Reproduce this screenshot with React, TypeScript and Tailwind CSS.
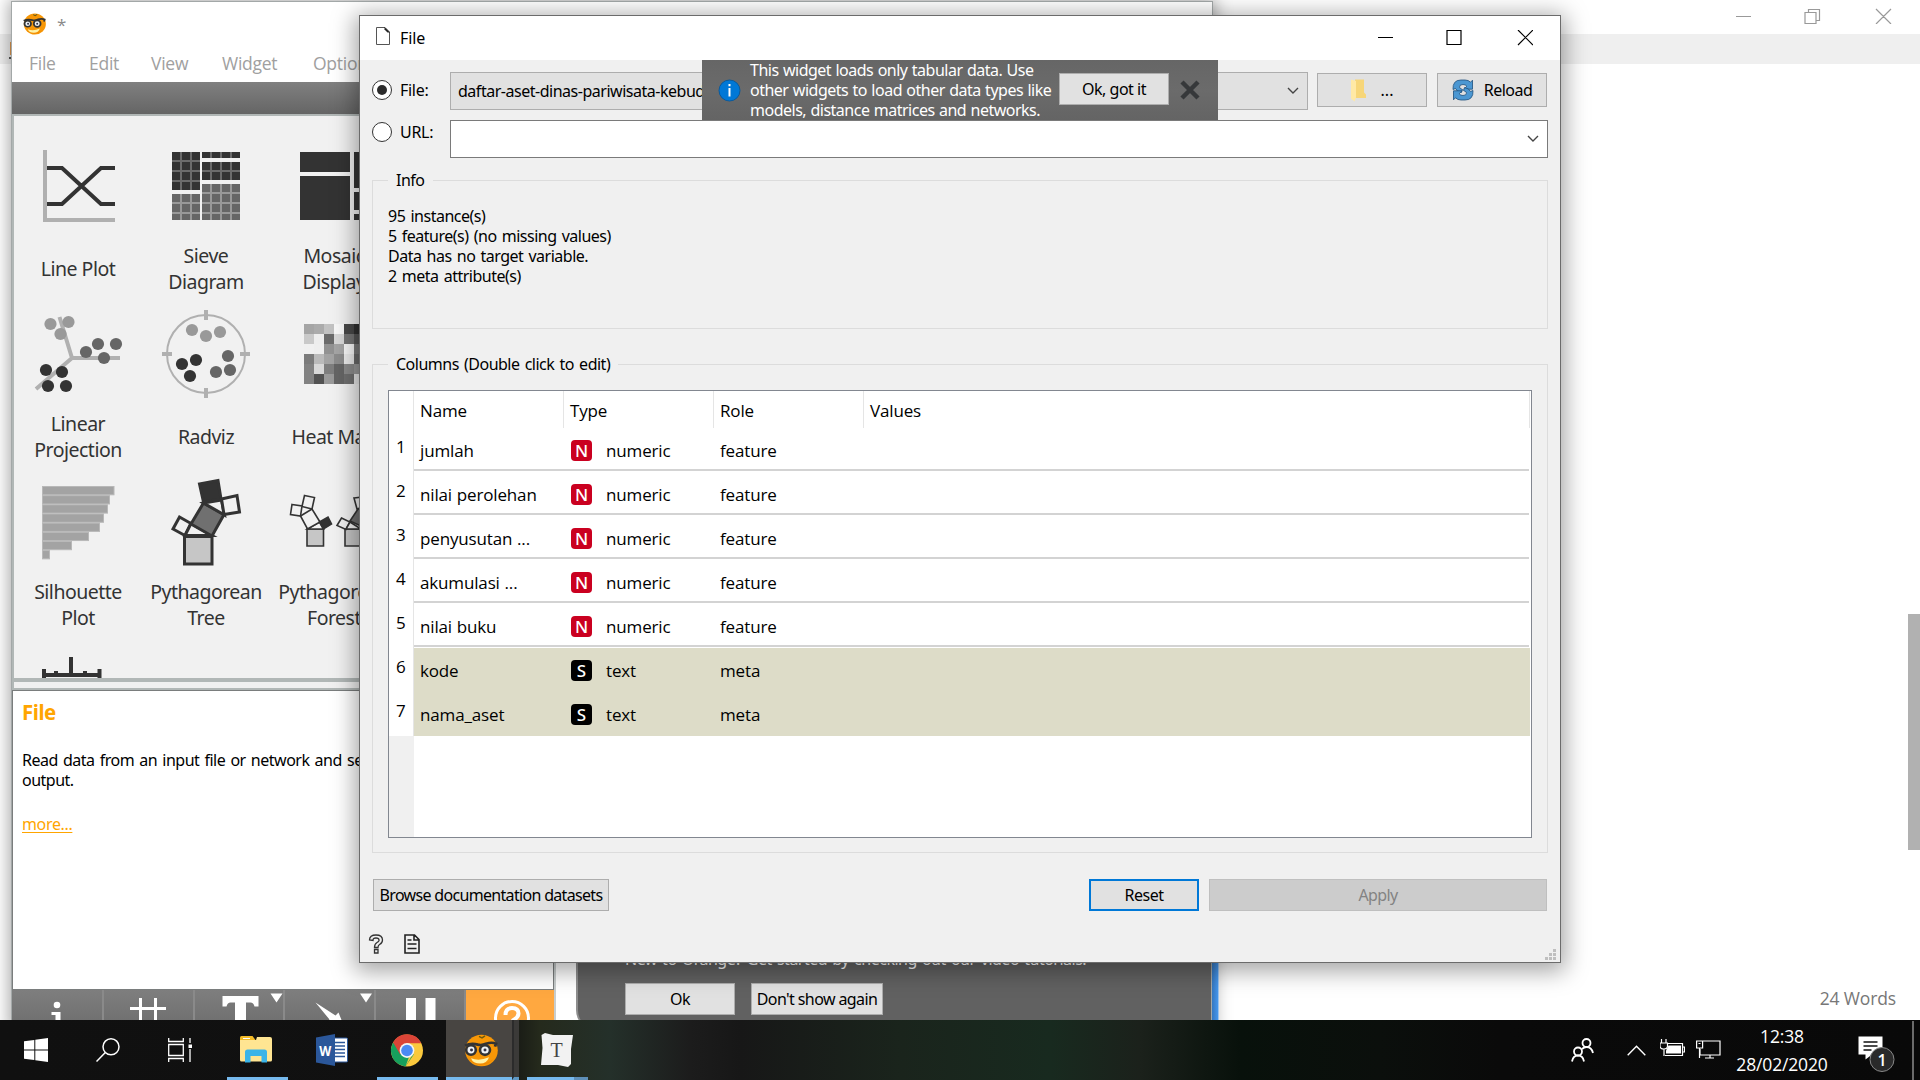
import React from "react";

const UI = "font-['Noto_Sans',sans-serif] text-[16px] leading-5 tracking-[-0.5px] [word-spacing:1.5px]";
const SEGOE = "font-['Open_Sans','Noto_Sans',sans-serif]";
const BTN = "flex shrink-0 items-center justify-center overflow-hidden whitespace-nowrap border border-[#adadad] bg-[#e1e1e1] text-black";

function OrangeLogo({ className }: { className: string }) {
  return (
    <svg className={className} viewBox="0 0 34 34" preserveAspectRatio="none">
      <circle cx="17.500" cy="17" r="16.300" fill="#f79707" />
      <path d="M4 25a16 16 0 0 0 26 0a15.500 12 0 0 1 -26 0z" fill="#e57a04" opacity=".6" />
      <path d="M15 2.500l3 1.500l3-2" stroke="#6a5a10" strokeWidth="1.500" fill="none" />
      <path d="M1 12q6-3 13-1q4 1 8-1q6-2 10 0l-1 3" stroke="#333" strokeWidth="2.800" fill="none" />
      <circle cx="7" cy="16.500" r="4.800" fill="#eef2f6" stroke="#333" strokeWidth="2.600" />
      <circle cx="21" cy="16.500" r="5" fill="#eef2f6" stroke="#333" strokeWidth="2.600" />
      <circle cx="7.500" cy="16.500" r="1.500" fill="#334" />
      <circle cx="21" cy="16.500" r="1.500" fill="#334" />
      <path d="M7 25q8 3.500 18-1q-2 6.500-9 6.500t-9-5.500z" fill="#fff3a8" />
    </svg>
  );
}

function LinePlotIcon() {
  return (
    <svg className="size-20" viewBox="38 146 80 80" fill="none">
      <path d="M45 150v70h70" stroke="#b0b0b0" strokeWidth="4" />
      <path d="M47 168h15l39 36h14M47 204h15l39-36h14" stroke="#333" strokeWidth="4" />
    </svg>
  );
}

function SieveIcon() {
  const blocks = [
    [172, 152, 28, 38, "#333", "#6b6b6b"],
    [202, 152, 38, 6, "#333", "#6b6b6b"],
    [202, 162, 38, 18, "#333", "#6b6b6b"],
    [172, 194, 28, 26, "#666", "#999"],
    [202, 184, 38, 36, "#666", "#999"],
  ] as const;
  return (
    <svg className="size-20" viewBox="166 146 80 80">
      {blocks.map(([x, y, w, h, fill, line], i) => (
        <g key={i}>
          <rect x={x} y={y} width={w} height={h} fill={fill} />
          {[180, 190, 210, 220, 230].filter((v) => v > x && v < x + w).map((v) => (
            <rect key={v} x={v} y={y} width="2" height={h} fill={line} />
          ))}
          {[160, 170, 180, 192, 202, 212].filter((v) => v > y && v < y + h - 1).map((v) => (
            <rect key={v} x={x} y={v} width={w} height="2" fill={line} />
          ))}
        </g>
      ))}
    </svg>
  );
}

function MosaicIcon() {
  return (
    <svg className="size-20" viewBox="294 146 80 80" fill="#333">
      <path d="M300 152h50v20h-50zM300 176h50v44h-50zM354 152h14v36h-14zM354 192h14v18h-14zM354 214h14v6h-14z" />
    </svg>
  );
}

function Dots({ points, fill }: { points: number[][]; fill: string }) {
  return <>{points.map(([x, y], i) => <circle key={i} cx={x} cy={y} r="6.100" fill={fill} />)}</>;
}

function LinearProjectionIcon() {
  return (
    <svg className="size-20 overflow-visible" viewBox="38 314 80 80">
      <path d="M59.500 317L72 358H120M72 358L36 389" stroke="#b0b0b0" strokeWidth="4" fill="none" />
      <Dots fill="#999" points={[[50.5, 324], [68.5, 322], [60.5, 334]]} />
      <Dots fill="#666" points={[[98, 344], [116, 344], [86, 352], [104, 358]]} />
      <Dots fill="#333" points={[[46, 370], [62, 372], [48, 386], [66, 386]]} />
    </svg>
  );
}

function RadvizIcon() {
  return (
    <svg className="size-20 overflow-visible" viewBox="166 314 80 80">
      <circle cx="206" cy="354" r="39" stroke="#b0b0b0" strokeWidth="2" fill="none" />
      <path d="M206 310v10M206 388v10M162 354h10M240 354h10" stroke="#b0b0b0" strokeWidth="4" />
      <Dots fill="#999" points={[[192, 330], [206, 336], [220, 332]]} />
      <Dots fill="#333" points={[[182, 364], [196, 360], [190, 376]]} />
      <Dots fill="#666" points={[[228, 356], [216, 372], [230, 370]]} />
    </svg>
  );
}

const HEAT = [
  ["#a5a5a5", "#ababab", "#c2c2c2", "#f8f8f8", "#484848", "#303030"],
  ["#c9c9c9", "#ededed", "#6b6b6b", "#d8d8d8", "#757575", "#555555"],
  ["#f0f0f0", "#eeeeee", "#929292", "#a5a5a5", "#f8f8f8", "#7a7a7a"],
  ["#7b7b7b", "#bababa", "#a3a3a3", "#8c8c8c", "#ececec", "#6a6a6a"],
  ["#828282", "#d8d8d8", "#7e7e7e", "#656565", "#8c8c8c", "#9a9a9a"],
  ["#828282", "#525252", "#9a9a9a", "#656565", "#707070", "#e8e8e8"],
];

function HeatMapIcon() {
  return (
    <svg className="size-20" viewBox="294 314 80 80" shapeRendering="crispEdges">
      {HEAT.map((row, y) => row.map((c, x) => (
        <rect key={x + "-" + y} x={304 + x * 10} y={324 + y * 10} width="10" height="10" fill={c} />
      )))}
    </svg>
  );
}

function SilhouetteIcon() {
  return (
    <svg className="size-20" viewBox="38 482 80 80">
      {[72, 67.5, 65.5, 61.5, 57.5, 46.5, 29.5, 7.5].map((w, i) => (
        <rect key={i} x="42.500" y={486.5 + i * 9.15} width={w - 0.5} height="8.300" fill="#a3a3a3" stroke="#b8b8b8" strokeWidth="1" />
      ))}
    </svg>
  );
}

function PythTreeIcon() {
  return (
    <svg className="size-20 overflow-visible" viewBox="166 482 80 80" stroke="#333" strokeWidth="3" fill="#f1f1f1">
      <path d="M184.500 536.500h27.500v27.500h-27.500z" fill="#c6c6c6" />
      <path d="M179.500 517l11.500 6.500l-6 12l-12-6.500z" />
      <path d="M191 523.500l-6 12l27 0z" />
      <path d="M203.500 503l20.500 11.500l-12 21.500l-21-12z" fill="#707070" />
      <path d="M203.500 503l18-3l3 15z" />
      <path d="M199.500 484l18.500-3.500l3 18.500l-17.500 3z" fill="#333" />
      <path d="M221.500 499l15.500-3.500l2.500 16.500l-15.500 2.500z" />
    </svg>
  );
}

function ForestIcon() {
  return (
    <svg className="size-20 overflow-visible" viewBox="294 482 80 80" stroke="#333" strokeWidth="1.600" fill="#f1f1f1">
      <path d="M307 529h16.500v17h-16.500z" fill="#c6c6c6" />
      <path d="M307.500 529l12-7l4 7z" />
      <path d="M300.500 516l11.500-7l8 13l-12.500 7z" />
      <path d="M304.500 495.500l10 2l-2.500 11.500l-10-2.500z" />
      <path d="M292 504.500l10 1.500l-1.500 10l-10-1.500z" />
      <path d="M319.500 522l8.500-5l3.500 7l-8 5z" fill="#333" />
      <path d="M345 529h18v17h-18z" fill="#c6c6c6" />
      <path d="M350 521l8-12h5v18z" fill="#707070" />
      <path d="M341.500 518l8.500 4l-4 7.500l-9-4z" />
      <path d="M350 522l11 7h-15z" />
      <path d="M354 498l9-1v10l-6 2z" />
    </svg>
  );
}

function AxisIcon() {
  return (
    <svg className="size-20" viewBox="38 650 80 80" stroke="#333" strokeWidth="4" fill="none">
      <path d="M42 675h59M44 669v12M99.500 669v12M71 657v20M56 671v6M85 671v6" />
    </svg>
  );
}

const WIDGETS = [
  { label: ["Line Plot"], icon: <LinePlotIcon /> },
  { label: ["Sieve", "Diagram"], icon: <SieveIcon /> },
  { label: ["Mosaic", "Display"], icon: <MosaicIcon /> },
  { label: ["Linear", "Projection"], icon: <LinearProjectionIcon /> },
  { label: ["Radviz"], icon: <RadvizIcon /> },
  { label: ["Heat Map"], icon: <HeatMapIcon /> },
  { label: ["Silhouette", "Plot"], icon: <SilhouetteIcon /> },
  { label: ["Pythagorean", "Tree"], icon: <PythTreeIcon /> },
  { label: ["Pythagorean", "Forest"], icon: <ForestIcon /> },
  { label: [], icon: <AxisIcon /> },
];

function DockButtons() {
  const cell = "flex h-[30px] w-[90.5px] shrink-0 border-r-2 border-[#8a8a8a] bg-linear-to-b from-[#7e7e7e] to-[#717171]";
  return (
    <div className="flex h-[30px] w-[542px]">
      <div className="flex h-[30px] w-[92px] shrink-0 border-r-2 border-[#8a8a8a] bg-linear-to-b from-[#7e7e7e] to-[#717171]">
        <svg className="h-[30px] w-full" viewBox="12 990 90 30" fill="#fff">
          <circle cx="57" cy="1005" r="3.300" />
          <path d="M51.500 1012h9v8h-5v-5h-4z" />
        </svg>
      </div>
      <div className={cell}>
        <svg className="h-[30px] w-full" viewBox="104 990 88.500 30" stroke="#fff" strokeWidth="3">
          <path d="M130 1008.500h36M140.500 998v22M155.500 998v22" />
        </svg>
      </div>
      <div className={cell}>
        <svg className="h-[30px] w-full" viewBox="194.500 990 88.500 30" fill="#fff">
          <path d="M222 996h36v10.500h-4q-1-4-4-4h-4.500v17.500h-11v-17.500h-4.500q-3 0-4 4h-4zM270 993.500h12l-6 9z" />
        </svg>
      </div>
      <div className={cell}>
        <svg className="h-[30px] w-full" viewBox="285 990 88.500 30" fill="#fff">
          <path d="M315.500 1002.500l20 13l3-3l4 10h-16l3-3zM360 993.500h12l-6 9z" />
        </svg>
      </div>
      <div className={cell}>
        <svg className="h-[30px] w-full" viewBox="375.500 990 88.500 30" fill="#fff">
          <path d="M405.500 998h10v22h-10zM425 998h10v22h-10z" />
        </svg>
      </div>
      <div className="h-[30px] flex-1 bg-[#ffa840]">
        <svg className="h-[30px] w-full" viewBox="466 990 88 30" fill="none" stroke="#fff">
          <circle cx="512" cy="1018" r="16.500" strokeWidth="3" />
          <path d="M505.500 1015q0-7 6.500-7t6.500 5.500q0 4-6.500 7.500" strokeWidth="4" />
        </svg>
      </div>
    </div>
  );
}

function OrangeWindow() {
  return (
    <div className="absolute left-[11px] top-px flex h-[1030px] w-[1202px] flex-col border border-[#a3a8a8] bg-white shadow-[0_0_16px_2px_rgba(0,0,0,0.35)]">
      <div className="flex h-[34px] shrink-0 items-center pl-[11px] pt-2.5">
        <OrangeLogo className="h-[22px] w-[23px]" />
        <span className={SEGOE + " ml-[11px] mt-0.5 text-[17px] leading-5 text-[#8a8a8a]"}>*</span>
      </div>
      <nav className={SEGOE + " flex h-[46px] shrink-0 items-start gap-[34px] pl-[17px] pt-[15px] text-[17.500px] leading-6 tracking-[-0.25px] text-[#a0a0a0]"}>
        <span className="w-[26px]">File</span>
        <span className="w-[28px]">Edit</span>
        <span className="w-[37px]">View</span>
        <span className="w-[57px]">Widget</span>
        <span>Options</span>
      </nav>
      <div className="h-8 shrink-0 bg-linear-to-b from-[#808080] to-[#656565]" />
      <div className="flex min-h-0 flex-1">
        <div className="flex w-[542px] shrink-0 flex-col">
          <div className="grid h-[568px] shrink-0 auto-rows-[168px] grid-cols-[128px_128px_128px] content-start overflow-hidden border-2 border-b-4 border-[#b1b7b6] bg-[#f1f1f1] pt-3.5">
            {WIDGETS.map((w, i) => (
              <div key={i} className="flex flex-col items-center pt-4">
                {w.icon}
                <div className="mt-[17px] flex h-[52px] flex-col items-center justify-center whitespace-nowrap font-['Noto_Sans',sans-serif] text-[19.500px] leading-[26px] tracking-[-0.5px] text-[#333]">
                  {w.label.map((l) => <span key={l}>{l}</span>)}
                </div>
              </div>
            ))}
          </div>
          <div className="h-2 shrink-0 border-b-2 border-l-2 border-[#b1b7b6] bg-[#f0f0f0]" />
          <div className={UI + " h-[300px] shrink-0 border border-[#7a7d7d] bg-white pl-[9px] pt-[7px] text-black"}>
            <h2 className="text-[20.500px] font-bold leading-7 tracking-[-0.5px] text-[#ffa500]">File</h2>
            <p className="mt-6 w-[430px]">Read data from an input file or network and send it to the output.</p>
            <p className="mt-6 tracking-[-0.35px] text-[#ffa500] underline underline-offset-2">more...</p>
          </div>
          <DockButtons />
        </div>
        <div className="flex flex-1 flex-col items-end border-l-2 border-[#c8cdcd] bg-white">
          <div className="mt-auto flex h-[430px] w-[636px] border-r border-[#a3a8a8]">
            <div className={UI + " flex flex-1 flex-col justify-start rounded-bl-[20px] border-b border-l-2 border-[#8d8d8d] bg-[#616161] pl-[47px] pt-[349px] text-black"}>
              <p className="text-white">New to Orange? Get started by checking out our video tutorials!</p>
              <div className="mt-[14px] flex gap-4">
                <button className={BTN + " h-8 w-[110px]"}>Ok</button>
                <button className={BTN + " h-8 w-[132px] tracking-[-0.6px]"}>Don't show again</button>
              </div>
            </div>
          </div>
        </div>
      </div>
    </div>
  );
}

function Chevron() {
  return (
    <svg className="h-2 w-3 shrink-0" viewBox="0 0 12 8" fill="none" stroke="#444" strokeWidth="1.400">
      <path d="M1 1l5 5l5-5" />
    </svg>
  );
}

function Radio({ checked, label }: { checked?: boolean; label: string }) {
  return (
    <label className="flex h-5 w-[78px] shrink-0 items-center gap-2">
      <span className="flex size-5 items-center justify-center rounded-full border-[1.500px] border-[#333] bg-white">
        {checked && <span className="size-2.5 rounded-full bg-[#2b2b2b]" />}
      </span>
      <span className="tracking-[-0.3px]">{label}</span>
    </label>
  );
}

const ROWS = [
  ["jumlah", "N", "numeric", "feature"],
  ["nilai perolehan", "N", "numeric", "feature"],
  ["penyusutan ...", "N", "numeric", "feature"],
  ["akumulasi ...", "N", "numeric", "feature"],
  ["nilai buku", "N", "numeric", "feature"],
  ["kode", "S", "text", "meta"],
  ["nama_aset", "S", "text", "meta"],
];

function ColumnsTable() {
  return (
    <div className={SEGOE + " flex h-[448px] w-[1144px] flex-col border border-[#828790] bg-white text-[17px] leading-6 tracking-[-0.15px] text-black [word-spacing:0.500px]"}>
      <div className="flex h-[37px] shrink-0">
        <div className="w-[25px] border-r border-[#e5e5e5]" />
        {["Name", "Type", "Role"].map((h) => (
          <div key={h} className="flex w-[150px] items-center border-r border-[#e5e5e5] pl-1.5 pt-[3px]">{h}</div>
        ))}
        <div className="flex w-[666px] items-center border-r border-[#e5e5e5] pl-1.5 pt-[3px]">Values</div>
      </div>
      {ROWS.map(([name, kind, type, role], i) => (
        <div key={name} className="flex h-11 shrink-0">
          <div className="w-[25px] border-r border-[#e5e5e5] pl-[7px] pt-[7px] leading-6">{i + 1}</div>
          <div className={kind === "N" ? "flex w-[1115px] flex-col" : "flex w-[1116px] flex-col bg-[#dddcc8]"}>
            <div className="flex h-[41px] shrink-0 items-center pt-[3px]">
              <span className="w-[150px] pl-1.5 pt-0.5">{name}</span>
              <span className={(kind === "N" ? "bg-[#ca0020]" : "bg-black") + " ml-[7px] flex h-[21px] w-[21px] items-center justify-center rounded-[4px] font-['Noto_Sans',sans-serif] text-[17px] font-medium leading-[21px] tracking-normal text-white"}>{kind}</span>
              <span className="ml-3.5 w-[114px] pt-0.5">{type}</span>
              <span className="pt-0.5">{role}</span>
            </div>
            {kind === "N" && <div className="h-0.5 bg-[#d3d3d3]" />}
          </div>
        </div>
      ))}
      <div className="w-[25px] flex-1 bg-[#f0f0f0]" />
    </div>
  );
}

function MessageBar() {
  return (
    <div className="absolute left-[342px] top-11 flex h-[60px] w-[516px] bg-linear-to-b from-[#666] via-[#6b6b6b] to-[#646464] text-white">
      <svg className="ml-4 mt-[18.500px] size-[23px]" viewBox="0 0 23 23">
        <circle cx="11.500" cy="11.500" r="10.500" fill="#0078d7" stroke="#0a5a9c" />
        <path d="M10.500 9h2v8.500h-2zM10.500 5h2v2.300h-2z" fill="#fff" />
      </svg>
      <p className="ml-[9px] w-[309px] whitespace-nowrap [word-spacing:0.700px]">
        This widget loads only tabular data. Use<br />other widgets to load other data types like<br />models, distance matrices and networks.
      </p>
      <button className={BTN + " mt-[13px] h-8 w-[110px]"}>Ok, got it</button>
      <svg className="ml-[11px] mt-5 size-5" viewBox="0 0 20 20" stroke="#36383a" strokeWidth="4.500">
        <path d="M2 2l16 16M18 2l-16 16" />
      </svg>
    </div>
  );
}

function FileDialog() {
  return (
    <div className={UI + " absolute left-[359px] top-[15px] flex h-[948px] w-[1202px] flex-col border border-[#6b6b6b] bg-[#f0f0f0] text-black shadow-[0_4px_22px_4px_rgba(0,0,0,0.36)]"}>
      <div className="flex h-11 shrink-0 items-center bg-white pl-4">
        <svg className="-mt-1 h-[18px] w-3.5" viewBox="0 0 14 18" fill="none" stroke="#555">
          <path d="M.5.500h8.500l4.500 4.500v12.500h-13z" />
          <path d="M8.500 0l5.500 5.500h-2.500l-3-3z" fill="#222" stroke="none" />
        </svg>
        <span className="ml-2.5 tracking-[-0.1px]">File</span>
        <svg className="ml-auto mr-[27px] h-4 w-[156px]" viewBox="1377.500 29.500 156 16" fill="none" stroke="#000" strokeWidth="1.200">
          <path d="M1378.500 37h15M1447.500 30h14v14h-14zM1518.500 29.500l15 15M1533.500 29.500l-15 15" />
        </svg>
      </div>
      <div className="flex flex-1 flex-col px-3 pt-3">
        <div className="flex h-[38px] items-center">
          <div className="pb-0.5"><Radio checked label="File:" /></div>
          <div className="flex h-[38px] w-[858px] items-center justify-between border border-[#adadad] bg-[#e1e1e1] pb-px pl-[7px] pr-2">
            <span className="whitespace-nowrap tracking-[-0.48px]">daftar-aset-dinas-pariwisata-kebudayaan</span>
            <Chevron />
          </div>
          <button className={BTN + " -mt-0.5 ml-[9px] h-[34px] w-[110px]"}>
            <svg className="h-[23px] w-[15px]" viewBox="0 0 15 23">
              <path d="M4 .5h9v13l2 2v3.500h-11z" fill="#f7d679" />
              <path d="M0 .5l5 1.500v16.500l-1.500 4l-3.500-3z" fill="#ffe9a6" />
            </svg>
            <span className="ml-[15px] tracking-normal">...</span>
          </button>
          <button className={BTN + " -mt-0.5 ml-2.5 h-[34px] w-[110px]"}>
            <svg className="h-[22px] w-[22px]" viewBox="0 0 22 22" fill="#4b97d2" stroke="#1d4f7c" strokeWidth=".8">
              <path d="M1 10.500q-.500-9.500 8-9.500h4q3.500 0 5.500 2.200l2-2v9h-8.500l2.800-3q-1.300-1.700-3.800-1.700q-3.500 0-3.500 2.500q0 1.500 3 2.500l-1 3q-5-1-6-4z" />
              <path d="M21 11.500q.500 9.500-8 9.500h-4q-3.500 0-5.500-2.200l-2 2v-9h8.500l-2.800 3q1.300 1.700 3.800 1.700q3.500 0 3.500-2.500q0-1.500-3-2.500l1-3q5 1 6 4z" />
            </svg>
            <span className="ml-2.5">Reload</span>
          </button>
        </div>
        <div className="mt-2.5 flex h-[38px] items-start">
          <div className="pt-0.5"><Radio label="URL:" /></div>
          <div className="flex h-[38px] w-[1098px] items-center justify-end border border-[#7a7a7a] bg-white pr-2">
            <Chevron />
          </div>
        </div>
        <fieldset className="mt-3 h-[159px] border border-[#dcdcdc] pl-[15px]">
          <legend className="px-2">Info</legend>
          <p className="mt-4">95 instance(s)<br />5 feature(s) (no missing values)<br />Data has no target variable.<br />2 meta attribute(s)</p>
        </fieldset>
        <fieldset className="mt-[25px] h-[499px] border border-[#dcdcdc] pl-[15px]">
          <legend className="px-2">Columns (Double click to edit)</legend>
          <div className="pt-4"><ColumnsTable /></div>
        </fieldset>
        <div className="mt-[26px] flex h-8 pl-px">
          <button className={BTN + " w-[236px] tracking-[-0.68px]"}>Browse documentation datasets</button>
          <button className="ml-auto flex w-[110px] items-center justify-center border-2 border-[#0078d7] bg-[#e1e1e1]">Reset</button>
          <button className="ml-2.5 mr-px flex w-[338px] items-center justify-center border border-[#bfbfbf] bg-[#ccc] tracking-[-0.6px] text-[#838383]">Apply</button>
        </div>
        <div className="mt-[23px] flex items-start">
          <svg className="-ml-1 h-5 w-4" viewBox="0 0 16 20" fill="none" stroke="#333" strokeWidth="1.300">
            <path d="M1.500 6q0-5 6.500-5t6.500 5q0 3-3 4.500q-1.500 1-1.500 3h-3.500q0-3.500 2.500-5t2-2.500q0-2-3-2t-3 2.500zM6.500 15.500h3.500v3.500h-3.500z" />
          </svg>
          <svg className="ml-5 h-5 w-4" viewBox="0 0 16 20" fill="none" stroke="#222" strokeWidth="1.600">
            <path d="M1 1h9.500l4.500 4.500v13.500h-14zM3.500 6h4M3.500 10h9M3.500 14.500h9M10 1v5h5" />
          </svg>
          <svg className="-mr-[9px] ml-auto mt-[15px] h-3 w-[13px]" viewBox="0 0 13 12" fill="#bfbfbf">
            <path d="M9 0h3v3h-3zM9 4h3v3h-3zM9 8h3v3h-3zM5 4h3v3h-3zM5 8h3v3h-3zM1 8h3v3h-3z" />
          </svg>
        </div>
      </div>
      <MessageBar />
    </div>
  );
}

function Taskbar() {
  return (
    <div className="relative flex h-[60px] shrink-0 items-center bg-[linear-gradient(90deg,#101010_0px,#111_500px,#252a1c_540px,#24302a_610px,#1c1c1c_690px,#171717_740px,#1a241c_900px,#182a1f_1050px,#1b211b_1140px,#08110b_1240px,#0b0f0c_1380px,#0a0a0a_1500px,#090909_1920px)]">
      <svg className="ml-6 size-6" viewBox="0 0 24 24" fill="#fff">
        <path d="M0 3.300L10.300 2v9.500H0zM11.300 1.800L24 0v11.500H11.300zM0 12.500h10.300V22L0 20.700zM11.300 12.500H24V24L11.300 22.200z" />
      </svg>
      <svg className="ml-12 size-6" viewBox="0 0 24 24" fill="none" stroke="#fff" strokeWidth="1.500">
        <circle cx="15" cy="8.800" r="8" /><path d="M9.300 14.500L.5 23.500" />
      </svg>
      <svg className="ml-12 size-6" viewBox="0 0 24 24" fill="none" stroke="#fff" strokeWidth="1.300">
        <path d="M.7 0v3.500h14.600V0M.7 6.500h14.600v11H.7zM.7 24v-3.500h14.600V24M22 0v5M22 11v13" />
        <path d="M20.500 6.500h3.500v3.500h-3.500z" fill="#fff" stroke="none" />
      </svg>
      <div className="ml-[35px] flex h-[60px] w-[61px] items-center justify-center border-b-[3px] border-[#76b9ed] pr-1 pt-0.5">
        <svg className="h-[27px] w-8" viewBox="0 0 32 27">
          <path d="M0 1.500q0-1.500 1.500-1.500h11l3 4h-15.500z" fill="#f4bb27" />
          <path d="M3 2h7v1h-7z" fill="#fff" />
          <path d="M0 4h16l1-3h13q2 0 2 2v21q0 1.500-1.500 1.500h-29q-1.500 0-1.500-1.500z" fill="#ffe592" />
          <path d="M5 26.500v-10.500q0-2.500 2.500-2.500h17q2.500 0 2.500 2.500v10.500h-5.500v-6.500h-11v6.500z" fill="#3bb4e8" />
        </svg>
      </div>
      <svg className="ml-7 h-8 w-8" viewBox="0 0 32 32">
        <path d="M17 4h13.500q1 0 1 1v22q0 1-1 1H17z" fill="#fff" stroke="#2b579a" />
        <path d="M19 8.500h10M19 12h10M19 15.500h10M19 19h10M19 22.500h10" stroke="#2b579a" strokeWidth="1.500" />
        <path d="M0 3.500L19 0v32L0 28.500z" fill="#2b579a" />
        <text x="9.300" y="21.500" textAnchor="middle" fill="#fff" fontSize="14" fontWeight="700" fontFamily="Open Sans, sans-serif" textLength="12" lengthAdjust="spacingAndGlyphs">W</text>
      </svg>
      <div className="ml-[29px] flex h-[60px] w-[61px] items-center justify-center border-b-[3px] border-[#76b9ed] pr-0.5">
        <svg className="mt-[3px] h-[33px] w-[34px]" viewBox="0 0 34 34">
          <circle cx="17" cy="17" r="16.500" fill="#fbc93d" />
          <path d="M17 17L2.700 8.700A16.500 16.500 0 0 0 15.500 33.500L24 21z" fill="#16a05d" />
          <path d="M17 9.500H31.800A16.500 16.500 0 0 0 2.700 8.700L10 21z" fill="#db4437" />
          <path d="M15.500 33.500L23.500 20L19 24z" fill="#fbc93d" />
          <circle cx="17" cy="17" r="7.600" fill="#f4f4f4" />
          <circle cx="17" cy="17" r="6" fill="#4a8af4" />
        </svg>
      </div>
      <div className="ml-2 flex h-[60px] w-[66px] items-center justify-center border-b-[3px] border-[#76b9ed] bg-[#484542] pl-1">
        <OrangeLogo className="mt-[3px] h-[33px] w-[34px]" />
      </div>
      <div className="h-[60px] w-[7px] border-b-[3px] border-l-2 border-b-[#5e98c4] border-l-[#2b2b2b] bg-[#3b3a38]" />
      <div className="ml-2 flex h-[60px] w-[47px] items-center justify-end border-b-[3px] border-[#76b9ed] pt-[3px]">
        <svg className="h-[34px] w-[34px]" viewBox="0 0 34 34">
          <path d="M5 0l8 2l20 0l-2 14l0 15l-3 3l-10-2l-17 0l1.500-17l-1-13z" fill="#f2f2f2" />
          <text x="16.500" y="24" textAnchor="middle" fill="#444" fontSize="20" fontFamily="Liberation Serif, serif">T</text>
        </svg>
      </div>
      <div className="h-[60px] w-3.5 border-b-[3px] border-[#5e8fb8]" />
      <div className="ml-auto flex h-[60px] w-[349px] items-center">
        <svg className="h-6 w-[23px]" viewBox="0 0 23 24" fill="none" stroke="#fff" strokeWidth="1.800">
          <circle cx="15.500" cy="5" r="4" /><circle cx="7" cy="13.500" r="4" />
          <path d="M1 23.500q1-6 6-6t6 6M11 11q2-2 4.500-2q5 0 6.500 6" />
        </svg>
        <svg className="ml-[33px] h-[11px] w-[19px]" viewBox="0 0 19 11" fill="none" stroke="#fff" strokeWidth="1.400">
          <path d="M.7 10.300L9.500 1.300l8.800 9" />
        </svg>
        <svg className="-mt-1 ml-3.5 h-[18px] w-[25px]" viewBox="0 0 25 18" fill="none" stroke="#fff" strokeWidth="1.200">
          <path d="M8 4.500h14.500v12h-17.500M23 8h1.500v5h-1.500M1.500 0v4M6 0v4M0 4h7.500v3q0 3-3.700 3q-3.800 0-3.800-3zM4 10v7" />
          <path d="M8.500 6.500h12.500v8h-15v-3z" fill="#fff" stroke="none" />
        </svg>
        <svg className="-mt-0.5 ml-[11px] h-[19px] w-[25px]" viewBox="0 0 25 19" fill="none" stroke="#fff" strokeWidth="1.200">
          <path d="M7 1h17v14h-20v-6M.6 1h6v7h-6zM2.500 3.500h2M3.500 8v10M14 15v3M9 18h9" />
        </svg>
        <div className={SEGOE + " ml-[9px] w-[104px] whitespace-nowrap text-center text-[17.500px] leading-7 tracking-[-0.15px] text-white"}>
          <p>12:38</p>
          <p>28/02/2020</p>
        </div>
        <svg className="ml-6 mt-[7px] h-9 w-[37px]" viewBox="1857.500 1037.500 37 36">
          <path d="M1858 1038h24v18h-10.500l-6.500 5v-5h-7z" fill="#fff" />
          <path d="M1863 1043.500h14M1863 1047.500h14M1863 1051.500h8" stroke="#111" strokeWidth="1.300" />
          <circle cx="1881.500" cy="1061" r="12" fill="#2a2a2a" stroke="#888" />
          <text x="1881.500" y="1067" textAnchor="middle" fill="#fff" fontSize="16" fontWeight="600" fontFamily="Open Sans, sans-serif">1</text>
        </svg>
        <div className="ml-auto mr-1.5 h-[59px] w-0.5 bg-[#6b6b6b]" />
      </div>
    </div>
  );
}

export default function App() {
  return (
    <div className="flex h-[1080px] w-[1920px] flex-col overflow-hidden bg-white">
      <div className="relative h-[1020px] shrink-0 overflow-hidden">
        <div className="flex h-full flex-col">
          <div className="flex h-[34px] shrink-0 justify-end pr-[28px] pt-2">
            <svg className="h-4 w-[157px]" viewBox="1735.500 8.500 157 16" fill="none" stroke="#999" strokeWidth="1.200">
              <path d="M1736.500 17h15M1805.500 13h11v11h-11zM1809 13v-3h11v11h-3M1876.500 9.500l15 15M1891.500 9.500l-15 15" />
            </svg>
          </div>
          <div className="h-[30px] shrink-0 bg-[#efefef] pl-[9px] pt-2">
            <div className="ml-px h-[13px] w-3 bg-[#e39a50]" />
            <div className="mt-0.5 h-0.5 w-3 bg-[#555]" />
          </div>
          <div className="flex flex-1 flex-col items-end">
            <div className="mt-[550px] h-[236px] w-3 shrink-0 bg-[#b1b1b1]" />
            <p className={SEGOE + " mr-6 mt-[136px] text-[17.500px] leading-6 tracking-[-0.15px] text-[#777]"}>24 Words</p>
          </div>
        </div>
        <OrangeWindow />
        <div className="absolute left-[1212px] top-[900px] h-[120px] w-[7px] border-r border-[#9cc4ee] bg-linear-to-r from-[#3577c0] to-[#4596ec]" />
        <FileDialog />
      </div>
      <Taskbar />
    </div>
  );
}
